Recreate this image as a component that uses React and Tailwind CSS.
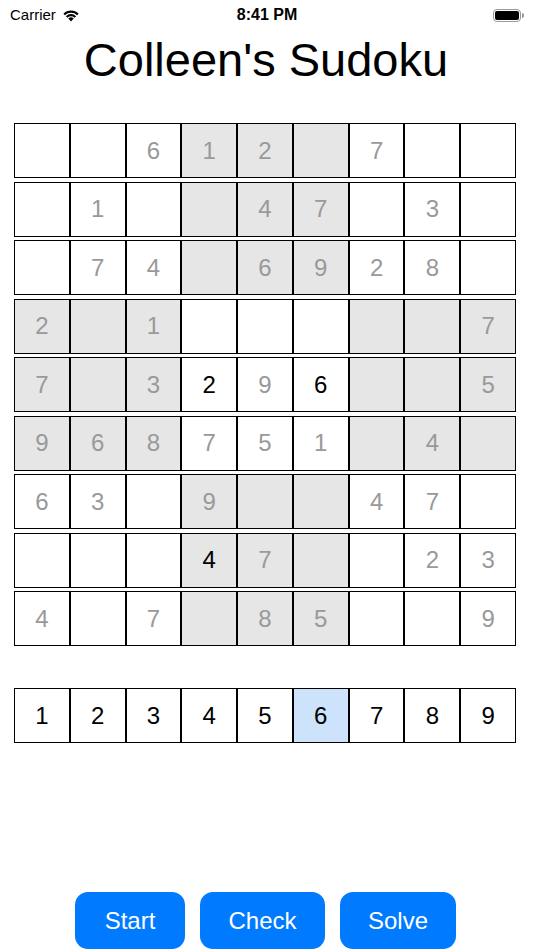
import React from 'react';

// board: '*' marks a number the player entered (black), others are givens (gray)
const rows = [
  ['', '', '6', '1', '2', '', '7', '', ''],
  ['', '1', '', '', '4', '7', '', '3', ''],
  ['', '7', '4', '', '6', '9', '2', '8', ''],
  ['2', '', '1', '', '', '', '', '', '7'],
  ['7', '', '3', '*2', '9', '*6', '', '', '5'],
  ['9', '6', '8', '7', '5', '1', '', '4', ''],
  ['6', '3', '', '9', '', '', '4', '7', ''],
  ['', '', '', '*4', '7', '', '', '2', '3'],
  ['4', '', '7', '', '8', '5', '', '', '9'],
];

function isShaded(r, c) {
  const br = Math.floor(r / 3);
  const bc = Math.floor(c / 3);
  return (br + bc) % 2 === 1;
}

function Cell({ value, shaded }) {
  const entered = value.startsWith('*');
  const text = entered ? value.slice(1) : value;
  return (
    <div
      className={`flex-1 h-full border border-black flex items-center justify-center text-[24px] ${
        shaded ? 'bg-[#e6e6e6]' : 'bg-white'
      } ${entered ? 'text-black' : 'text-[#999999]'}`}
    >
      {text}
    </div>
  );
}

function StatusBar() {
  return (
    <div className="h-[30px] flex items-center justify-between px-[10px] text-[15px] text-black relative">
      <div className="flex items-center gap-[6px]">
        <span>Carrier</span>
        <svg width="18" height="13" viewBox="0 0 18 13">
          <path d="M9 12.5 L6.3 9.6 A3.8 3.8 0 0 1 11.7 9.6 Z" fill="black" />
          <path d="M3.9 7.2 A7.2 7.2 0 0 1 14.1 7.2 L12.6 8.7 A5.1 5.1 0 0 0 5.4 8.7 Z" fill="black" />
          <path d="M1.4 4.7 A10.8 10.8 0 0 1 16.6 4.7 L15.1 6.2 A8.7 8.7 0 0 0 2.9 6.2 Z" fill="black" />
        </svg>
      </div>
      <span className="absolute left-1/2 -translate-x-1/2 font-semibold text-[16px]">8:41 PM</span>
      <div className="flex items-center">
        <div className="w-[28px] h-[13px] rounded-[4px] border border-[#999] p-[1px]">
          <div className="w-full h-full bg-black rounded-[2px]" />
        </div>
        <div className="w-[2px] h-[5px] bg-[#999] rounded-r-sm ml-[1px]" />
      </div>
    </div>
  );
}

export default function App() {
  return (
    <div
      className="w-[534px] h-[950px] bg-white flex flex-col overflow-hidden"
      style={{ fontFamily: '"Liberation Sans", Arial, sans-serif' }}
    >
      <StatusBar />

      {/* Title */}
      <h1 className="text-center text-[47px] leading-[54px] text-black mt-[3px] pr-[2px]">Colleen's Sudoku</h1>

      {/* Board */}
      <div className="w-[502px] ml-[14px] mt-[36px] flex flex-col gap-[3.5px]">
        {rows.map((row, r) => (
          <div key={r} className="flex h-[55px]">
            {row.map((v, c) => (
              <Cell key={c} value={v} shaded={isShaded(r, c)} />
            ))}
          </div>
        ))}
      </div>

      {/* Number picker */}
      <div className="w-[502px] ml-[14px] mt-[42px] flex h-[55px]">
        {['1', '2', '3', '4', '5', '6', '7', '8', '9'].map((n) => (
          <div
            key={n}
            className={`flex-1 h-full border border-black flex items-center justify-center text-[24px] text-black ${
              n === '6' ? 'bg-[#cde3fb]' : 'bg-white'
            }`}
          >
            {n}
          </div>
        ))}
      </div>

      <div className="flex-1" />

      {/* Buttons */}
      <div className="flex justify-center gap-[15px] mb-[1px] pr-[3px]">
        <button className="w-[110px] h-[57px] rounded-[13px] bg-[#007aff] text-white text-[24px]">Start</button>
        <button className="w-[125px] h-[57px] rounded-[13px] bg-[#007aff] text-white text-[24px]">Check</button>
        <button className="w-[116px] h-[57px] rounded-[13px] bg-[#007aff] text-white text-[24px]">Solve</button>
      </div>
    </div>
  );
}
